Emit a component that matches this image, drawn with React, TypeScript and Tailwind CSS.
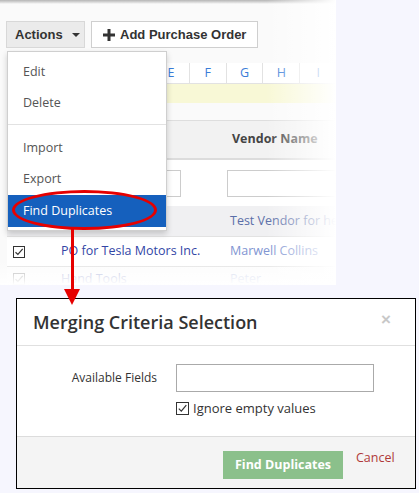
export default function App() {
  const letters = ['E', 'F', 'G', 'H', 'I'];
  return (
    <div className="relative w-[419px] h-[493px] overflow-hidden bg-[#f6f6fe] font-['Open_Sans',sans-serif]">
      {/* screenshot of the purchase orders page */}
      <div className="relative w-[336px] h-[285px] overflow-hidden bg-[#fafafa]">
        <div className="h-[4px] bg-gradient-to-b from-[#b5b5b5] via-[#d5d5d5] to-[#fafafa]" />
        <div className="flex gap-[6px] pl-[6px] pt-[17px] font-['Liberation_Sans',Arial,sans-serif] text-[13px] font-bold text-[#333]">
          <div className="flex h-[27px] w-[79px] items-center gap-[9px] border border-[#d8d8d8] bg-[#ebebeb] pl-[8px]">
            <span>Actions</span>
            <span className="h-0 w-0 border-x-[4px] border-t-[4px] border-x-transparent border-t-[#333]" />
          </div>
          <div className="flex h-[27px] w-[167px] items-center gap-[5px] border border-[#cfcfcf] bg-white pl-[11px]">
            <svg width="12" height="12" viewBox="0 0 12 12">
              <path d="M4.5 0h3v4.5H12v3H7.5V12h-3V7.5H0v-3h4.5z" fill="#333" />
            </svg>
            <span>Add Purchase Order</span>
          </div>
        </div>

        <div className="ml-[7px] mt-[15px] text-[12.5px]">
          <div className="flex h-[21px] border-b border-[#e2e2e2] bg-white">
            <div className="w-[146px]" />
            {letters.map((l) => (
              <div key={l} className="flex w-[37px] items-center justify-center border-l border-[#e2e2e2] text-[#3b7dd8]">
                {l}
              </div>
            ))}
          </div>
          <div className="h-[19px] bg-[#f8f8d6]" />
          <div className="h-[18px] border-b border-[#dedede] bg-[#fafafa]" />
          <div className="flex h-[39px] items-center border-b-2 border-[#dcdcdc] bg-[#f2f2f2] pl-[225px] font-bold text-[#444]">
            Vendor Name
          </div>
          <div className="flex h-[46px] items-center bg-white">
            <div className="ml-[130px] h-[27px] w-[49px] border border-[#cccccc] bg-white" />
            <div className="ml-[46px] h-[27px] w-[120px] border border-[#cccccc] bg-white" />
          </div>
          <div className="flex h-[31px] items-center border-b border-[#e2e2e2] bg-[#f0f0f2] pl-[223px] text-[12.5px] text-[#5a6ea8]">
            <span className="whitespace-nowrap">Test Vendor for he</span>
          </div>
          <div className="flex h-[30px] items-center border-b border-[#e2e2e2] bg-white text-[12.5px]">
            <div className="ml-[6px] flex h-[12px] w-[12px] items-center justify-center border border-[#333]">
              <svg width="10" height="10" viewBox="0 0 10 10">
                <path d="M1.5 5.2l2.4 2.3 4.8-5.6" stroke="#333" strokeWidth="1.2" fill="none" />
              </svg>
            </div>
            <span className="ml-[36px] w-[169px] whitespace-nowrap text-[#3346a6]">PO for Tesla Motors Inc.</span>
            <span className="whitespace-nowrap text-[#7f95d2]">Marwell Collins</span>
          </div>
          <div className="flex h-[30px] items-start pt-[6px] bg-white text-[12.5px] opacity-40">
            <div className="ml-[6px] flex h-[12px] w-[12px] items-center justify-center border border-[#333]">
              <svg width="10" height="10" viewBox="0 0 10 10">
                <path d="M1.5 5.2l2.4 2.3 4.8-5.6" stroke="#333" strokeWidth="1.2" fill="none" />
              </svg>
            </div>
            <span className="ml-[36px] w-[169px] whitespace-nowrap leading-[12px] text-[#3346a6]">Hand Tools</span>
            <span className="whitespace-nowrap leading-[12px] text-[#7f95d2]">Peter</span>
          </div>
        </div>

        <div className="absolute right-0 top-0 h-full w-[70px] bg-gradient-to-r from-transparent to-white" />
        <div className="absolute bottom-0 left-0 h-[24px] w-full bg-gradient-to-b from-transparent to-white" />
      </div>

      {/* actions dropdown menu */}
      <div className="absolute left-[7px] top-[51px] w-[160px] border border-[#cfcfcf] bg-white pb-[3px] pt-[5px] text-[12.5px] text-[#555] shadow-[0_3px_6px_rgba(0,0,0,0.18)]">
        <div className="flex h-[31px] items-center pl-[15px]">Edit</div>
        <div className="flex h-[31px] items-center pl-[15px]">Delete</div>
        <div className="mb-[8px] mt-[5px] h-px bg-[#e2e2e2]" />
        <div className="flex h-[31px] items-center pl-[15px]">Import</div>
        <div className="flex h-[31px] items-center pl-[15px]">Export</div>
        <div className="flex h-[32px] items-center bg-[#1560bd] pl-[15px] text-white">Find Duplicates</div>
      </div>

      {/* annotation */}
      <div className="absolute left-[12px] top-[190px] h-[40px] w-[145px] rounded-[50%] border-[3px] border-[#e60000]" />
      <div className="absolute left-[71px] top-[229px] h-[62px] w-[3px] bg-[#e60000]" />
      <div className="absolute left-[64px] top-[289px] h-0 w-0 border-x-[8px] border-t-[16px] border-x-transparent border-t-[#e60000]" />

      {/* merging criteria dialog */}
      <div className="ml-[16px] mt-[13px] flex h-[191px] w-[400px] flex-col border-[1.5px] border-black bg-white text-[#333]">
        <div className="flex h-[47px] items-center justify-between border-b border-[#e0e0e0] pl-[16px] pr-[24px]">
          <span className="text-[18px] font-semibold">Merging Criteria Selection</span>
          <span className="mb-[4px] font-['Liberation_Sans',Arial,sans-serif] text-[17px] font-bold text-[#c8c8c8]">×</span>
        </div>
        <div className="flex-1">
          <div className="mt-[18px] flex items-center">
            <span className="w-[140px] text-right text-[12px]">Available Fields</span>
            <div className="ml-[19px] h-[28px] w-[198px] border border-[#aaaaaa]" />
          </div>
          <div className="ml-[159px] mt-[7px] flex items-center gap-[4px] text-[13px]">
            <div className="flex h-[13px] w-[13px] items-center justify-center border border-[#333]">
              <svg width="11" height="11" viewBox="0 0 11 11">
                <path d="M1.8 5.6l2.5 2.5 5-6" stroke="#333" strokeWidth="1.2" fill="none" />
              </svg>
            </div>
            <span>Ignore empty values</span>
          </div>
        </div>
        <div className="flex h-[52px] items-start border-t border-[#dcdcdc] bg-[#f4f4f4] pl-[206px]">
          <div className="mt-[14px] flex h-[28px] w-[120px] items-center justify-center bg-[#8bc08b] text-[12.5px] font-bold text-white">
            Find Duplicates
          </div>
          <span className="ml-[13px] mt-[12px] text-[12.5px] text-[#b03a3a]">Cancel</span>
        </div>
      </div>
    </div>
  );
}
